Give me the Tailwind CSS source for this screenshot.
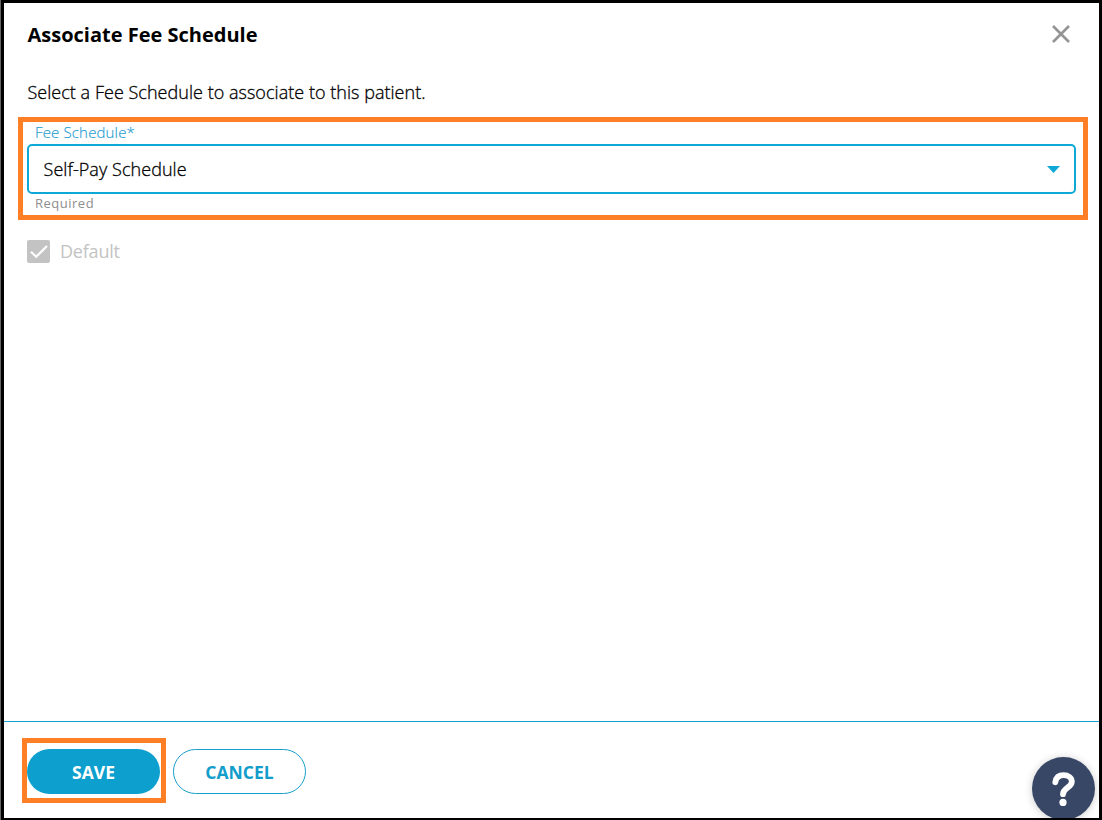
<!DOCTYPE html>
<html lang="en">
<head>
<meta charset="utf-8">
<title>Associate Fee Schedule</title>
<script src="https://cdn.jsdelivr.net/npm/@tailwindcss/browser@4"></script>
</head>
<body class="h-[820px] w-[1102px] overflow-hidden bg-[#666] pl-px font-['Open_Sans',sans-serif] text-black">
<div class="relative flex h-[820px] flex-col overflow-hidden border-x-[3px] border-t-[3px] border-b-2 border-black bg-white">
  <header class="flex h-16 items-center justify-between pr-7 pl-[23.5px]">
    <h1 class="text-[20px] leading-6 font-bold whitespace-nowrap">Associate Fee Schedule</h1>
    <button aria-label="Close" class="mb-0.5 flex size-5 items-center justify-center">
      <svg class="size-5" viewBox="0 0 20 20" fill="none" stroke="#949494" stroke-width="2.6"><path d="M2 2L18 18M18 2L2 18"/></svg>
    </button>
  </header>
  <main class="flex grow flex-col">
    <p class="mt-[13px] pl-[23.5px] text-[18px] leading-6 font-light tracking-[0.03px] [-webkit-text-stroke:0.3px_currentColor]">Select a Fee Schedule to associate to this patient.</p>
    <section class="mt-[13px] mr-[11px] ml-[14px] h-[103px] border-5 border-[#ff7f27] pr-[7px] pl-1">
      <label class="block h-[22px] pl-2 text-[15px] leading-[20px] font-light tracking-[0.15px] text-[#1c9ad0] [-webkit-text-stroke:0.15px_currentColor]">Fee Schedule*</label>
      <div class="flex h-[50px] items-center justify-between rounded-[5px] border-2 border-[#0ea8d6] pr-[14px] pl-[14.5px] text-[18px] font-light tracking-[0.06px]">
        <span class="[-webkit-text-stroke:0.3px_currentColor]">Self-Pay Schedule</span>
        <svg class="h-[7px] w-[13px]" viewBox="0 0 13 7"><path d="M0 0H13L6.5 7Z" fill="#0ea8d6"/></svg>
      </div>
      <p class="pl-2 text-[13px] leading-[18px] tracking-[0.5px] text-[#8e8e8e]">Required</p>
    </section>
    <div class="mt-5 flex h-[23px] items-center gap-[10px] pl-[23px] text-[18px] tracking-[-0.2px] text-[#c3c3c3]">
      <svg class="size-[23px]" viewBox="0 0 23 23" fill="none"><rect width="23" height="23" rx="2" fill="#c3c3c3"/><path d="M4 11.7L9.2 16.8L20 6" stroke="#fff" stroke-width="2.2"/></svg>
      <span>Default</span>
    </div>
  </main>
  <footer class="flex h-[97px] shrink-0 border-t border-[#1a9fcb] pt-4 pl-[18px] text-[17.5px] font-bold">
    <div class="h-[65px] w-[144px] border-5 border-[#ff7f27] pt-[6px]">
      <button class="flex h-[45px] w-[133px] items-center justify-center rounded-full bg-[#0d9fcd] pt-0.5 text-white">SAVE</button>
    </div>
    <button class="mt-[11px] ml-[7px] flex h-[45px] w-[133px] items-center justify-center rounded-full border border-[#1a9fcb] pt-0.5 text-[#129dcb]">CANCEL</button>
  </footer>
  <button aria-label="Help" class="absolute top-[754px] left-[1028px] flex size-[63px] items-center justify-center rounded-full bg-[#384766] shadow-[0_1px_8px_rgba(0,0,0,0.2)]">
    <svg class="size-[63px]" viewBox="0 0 63 63" fill="none"><path d="M23.3 25.2C24 20.7 27 18.2 31.6 18.2C36.4 18.2 39.8 20.7 39.8 24.7C39.8 30.7 31 30.7 31 37.2" stroke="#fff" stroke-width="5.8" stroke-linecap="round"/><circle cx="31" cy="45.4" r="3.6" fill="#fff"/></svg>
  </button>
</div>
</body>
</html>
